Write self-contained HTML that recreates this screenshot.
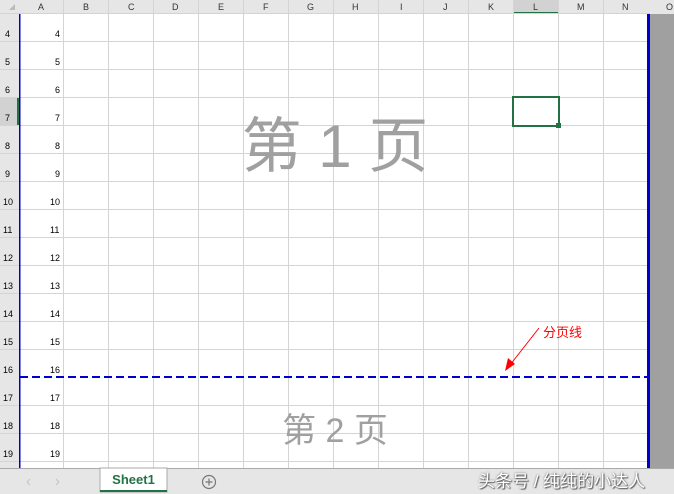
<!DOCTYPE html>
<html><head><meta charset="utf-8"><style>
body{margin:0;width:674px;height:494px;overflow:hidden;background:#fff;font-family:"Liberation Sans","Noto Sans CJK SC",sans-serif;position:relative}
.a{position:absolute}
</style></head><body>
<svg class="a" style="left:0;top:0" width="674" height="494">
<rect x="0" y="0" width="674" height="14" fill="#e6e6e6"/>
<rect x="0" y="0" width="19" height="468" fill="#e6e6e6"/>
<rect x="513" y="0" width="46" height="13" fill="#d2d2d2"/>
<rect x="513" y="12" width="46" height="2" fill="#217346"/>
<rect x="0" y="97" width="19" height="29" fill="#d2d2d2"/>
<rect x="17" y="97" width="2" height="29" fill="#217346"/>
<polygon points="9,10 15,4 15,10" fill="#bbb"/>
<g stroke="#d4d4d4" stroke-width="1">
<line x1="0" y1="13.5" x2="650" y2="13.5"/>
<line x1="63.5" y1="0" x2="63.5" y2="468"/><line x1="108.5" y1="0" x2="108.5" y2="468"/><line x1="153.5" y1="0" x2="153.5" y2="468"/><line x1="198.5" y1="0" x2="198.5" y2="468"/><line x1="243.5" y1="0" x2="243.5" y2="468"/><line x1="288.5" y1="0" x2="288.5" y2="468"/><line x1="333.5" y1="0" x2="333.5" y2="468"/><line x1="378.5" y1="0" x2="378.5" y2="468"/><line x1="423.5" y1="0" x2="423.5" y2="468"/><line x1="468.5" y1="0" x2="468.5" y2="468"/><line x1="513.5" y1="0" x2="513.5" y2="468"/><line x1="558.5" y1="0" x2="558.5" y2="468"/><line x1="603.5" y1="0" x2="603.5" y2="468"/>
<line x1="0" y1="41.5" x2="650" y2="41.5"/><line x1="0" y1="69.5" x2="650" y2="69.5"/><line x1="0" y1="97.5" x2="650" y2="97.5"/><line x1="0" y1="125.5" x2="650" y2="125.5"/><line x1="0" y1="153.5" x2="650" y2="153.5"/><line x1="0" y1="181.5" x2="650" y2="181.5"/><line x1="0" y1="209.5" x2="650" y2="209.5"/><line x1="0" y1="237.5" x2="650" y2="237.5"/><line x1="0" y1="265.5" x2="650" y2="265.5"/><line x1="0" y1="293.5" x2="650" y2="293.5"/><line x1="0" y1="321.5" x2="650" y2="321.5"/><line x1="0" y1="349.5" x2="650" y2="349.5"/><line x1="0" y1="405.5" x2="650" y2="405.5"/><line x1="0" y1="433.5" x2="650" y2="433.5"/><line x1="0" y1="461.5" x2="650" y2="461.5"/>
</g>
<rect x="650" y="14" width="24" height="454" fill="#a0a0a0"/>
<rect x="647" y="14" width="3" height="454" fill="#0000cc"/>
<rect x="19" y="14" width="1.5" height="454" fill="#0000cc"/>
<line x1="20" y1="377" x2="647" y2="377" stroke="#0000cc" stroke-width="2" stroke-dasharray="8,4"/>
<rect x="513" y="97" width="46" height="29" fill="none" stroke="#217346" stroke-width="2"/>
<rect x="556" y="123" width="5" height="5" fill="#217346"/>
<line x1="539" y1="328" x2="510" y2="365" stroke="#f00" stroke-width="1"/>
<polygon points="505,371 508,358 515,364" fill="#f00"/>
<rect x="0" y="468" width="674" height="26" fill="#e6e6e6"/>
<line x1="0" y1="468.5" x2="674" y2="468.5" stroke="#aaa"/>
<rect x="100" y="468" width="67" height="24" fill="#fff" stroke="#aaa"/>
<rect x="100" y="490" width="67" height="2" fill="#217346"/>
<circle cx="209" cy="482" r="6.5" fill="none" stroke="#777" stroke-width="1.2"/>
<path d="M205.5 482h7M209 478.5v7" stroke="#777" stroke-width="1.2"/>
<path d="M30 479l-3 3 3 3M56 479l3 3-3 3" fill="none" stroke="#c4c4c4"/>
</svg>
<div class="a" style="left:0;top:0;width:674px;font-size:9px;color:#333">
<span class="a" style="left:38px;top:2px">A</span><span class="a" style="left:83px;top:2px">B</span><span class="a" style="left:128px;top:2px">C</span><span class="a" style="left:172px;top:2px">D</span><span class="a" style="left:218px;top:2px">E</span><span class="a" style="left:263px;top:2px">F</span><span class="a" style="left:307px;top:2px">G</span><span class="a" style="left:352px;top:2px">H</span><span class="a" style="left:400px;top:2px">I</span><span class="a" style="left:443px;top:2px">J</span><span class="a" style="left:488px;top:2px">K</span><span class="a" style="left:533px;top:2px">L</span><span class="a" style="left:577px;top:2px">M</span><span class="a" style="left:622px;top:2px">N</span><span class="a" style="left:666px;top:2px">O</span>
</div>
<div class="a" style="left:0;top:0;font-size:9px;color:#000">
<span class="a" style="left:5px;top:29px">4</span><span class="a" style="left:55px;top:29px">4</span>
<span class="a" style="left:5px;top:57px">5</span><span class="a" style="left:55px;top:57px">5</span>
<span class="a" style="left:5px;top:85px">6</span><span class="a" style="left:55px;top:85px">6</span>
<span class="a" style="left:5px;top:113px">7</span><span class="a" style="left:55px;top:113px">7</span>
<span class="a" style="left:5px;top:141px">8</span><span class="a" style="left:55px;top:141px">8</span>
<span class="a" style="left:5px;top:169px">9</span><span class="a" style="left:55px;top:169px">9</span>
<span class="a" style="left:3px;top:197px">10</span><span class="a" style="left:50px;top:197px">10</span>
<span class="a" style="left:3px;top:225px">11</span><span class="a" style="left:50px;top:225px">11</span>
<span class="a" style="left:3px;top:253px">12</span><span class="a" style="left:50px;top:253px">12</span>
<span class="a" style="left:3px;top:281px">13</span><span class="a" style="left:50px;top:281px">13</span>
<span class="a" style="left:3px;top:309px">14</span><span class="a" style="left:50px;top:309px">14</span>
<span class="a" style="left:3px;top:337px">15</span><span class="a" style="left:50px;top:337px">15</span>
<span class="a" style="left:3px;top:365px">16</span><span class="a" style="left:50px;top:365px">16</span>
<span class="a" style="left:3px;top:393px">17</span><span class="a" style="left:50px;top:393px">17</span>
<span class="a" style="left:3px;top:421px">18</span><span class="a" style="left:50px;top:421px">18</span>
<span class="a" style="left:3px;top:449px">19</span><span class="a" style="left:50px;top:449px">19</span>
</div>
<div class="a" style="left:235px;top:112px;width:200px;text-align:center;font-size:60px;color:#a0a0a0;line-height:70px;white-space:pre">第 1 页</div>
<div class="a" style="left:260px;top:410px;width:150px;text-align:center;font-size:34px;color:#a0a0a0;line-height:42px;white-space:pre">第 2 页</div>
<div class="a" style="left:543px;top:322px;font-size:13px;color:#f00">分页线</div>
<div class="a" style="left:100px;top:472px;width:67px;text-align:center;font-size:13px;font-weight:bold;color:#217346">Sheet1</div>
<div class="a" style="left:478px;top:467px;font-size:17px;color:#fff;text-shadow:0 0 2px #666,1px 1px 1px #555">头条号 / 纯纯的小达人</div>
</body></html>
